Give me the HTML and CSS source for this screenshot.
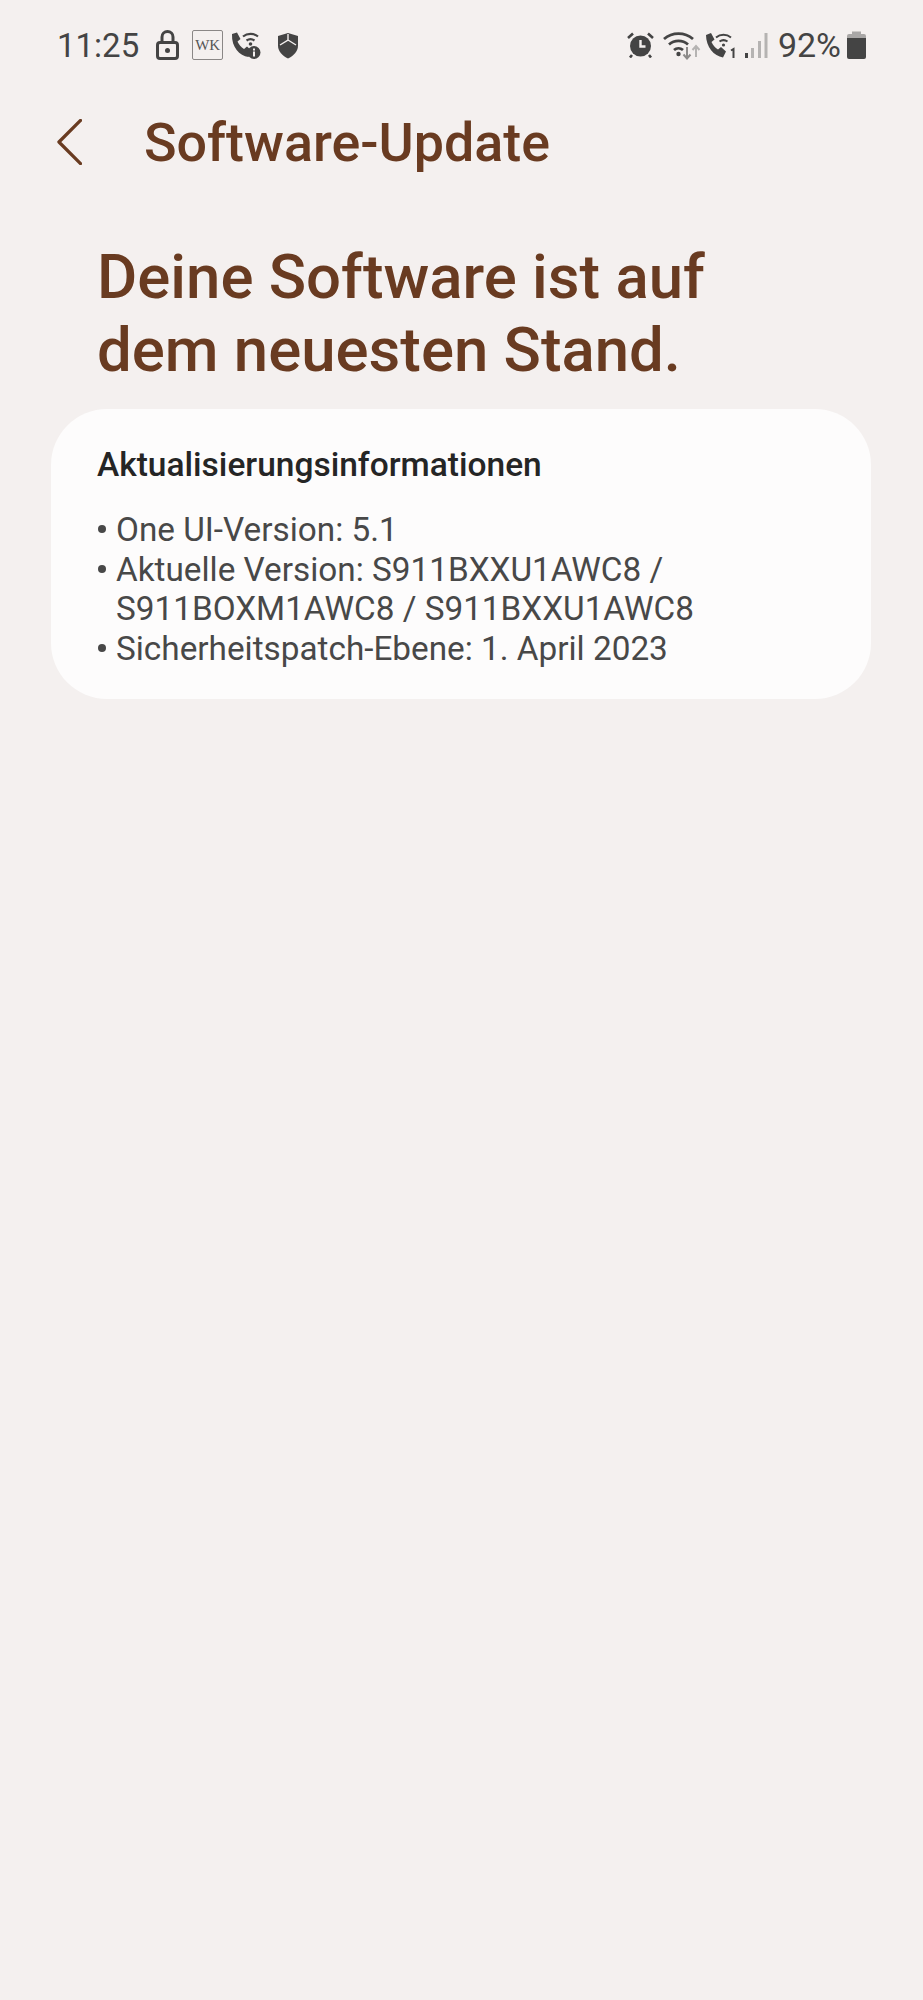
FILE: index.html
```html
<!DOCTYPE html>
<html>
<head>
  <meta name="viewport" content="width=device-width, initial-scale=1.0">
  <title>Software-Update</title>
  <link rel="stylesheet" href="styles.css">
</head>
<body>
  <div class="statusbar">
    <div class="status-group">
      <span class="time">11:25</span>
      <svg class="ic-lock" viewBox="0 0 23 30">
        <path d="M6 13V7a5.500 5.500 0 0 1 11 0v6" fill="none" stroke="#444" stroke-width="3"/>
        <rect x="1.500" y="12.500" width="20" height="16" rx="2.500" fill="none" stroke="#444" stroke-width="3"/>
        <circle cx="11.500" cy="20.500" r="2.500" fill="#444"/>
      </svg>
      <span class="wk">WK</span>
      <svg class="ic-call" viewBox="0 0 32 28">
        <path d="M3 3l5-1.500 3.500 6.500-3 2.500c1.500 3.500 3.500 5.500 6.500 7.500l3-2.500 5 4.500-3.500 6c-9-1-17-10-16.500-22.500z" fill="#444"/>
        <path d="M14 5.500a12 12 0 0 1 15 0M17.500 9.500a7 7 0 0 1 8 0" fill="none" stroke="#444" stroke-width="2.200"/>
        <circle cx="21.500" cy="13" r="1.800" fill="#444"/>
        <circle cx="25" cy="21.500" r="6.500" fill="#444"/>
        <rect x="24" y="20.500" width="2" height="5" fill="#f4f0ef"/>
        <rect x="24" y="17.500" width="2" height="2" fill="#f4f0ef"/>
      </svg>
      <svg class="ic-shield" viewBox="0 0 22 27">
        <path d="M11 1l10 3v9.500c0 6-4.500 10.500-10 13C5.500 24 1 19.500 1 13.500V4z" fill="#444"/>
        <path d="M11 2v6l-8 5M11 8l8 5" fill="none" stroke="#f4f0ef" stroke-width="1.400"/>
      </svg>
    </div>
    <div class="status-group">
      <svg class="ic-alarm" viewBox="0 0 27 26">
        <circle cx="13.500" cy="14" r="10.500" fill="#444"/>
        <path d="M13.500 8v6.500h5" fill="none" stroke="#f4f0ef" stroke-width="2.400"/>
        <path d="M1 6l5-4.500M26 6l-5-4.500M5 23l-2 2.500M22 23l2 2.500" fill="none" stroke="#444" stroke-width="2.600"/>
      </svg>
      <svg class="ic-wifi" viewBox="0 0 38 30">
        <path d="M1 9a22 22 0 0 1 29 0M6 14.500a14.500 14.500 0 0 1 19 0M11 20a7 7 0 0 1 9 0" fill="none" stroke="#444" stroke-width="2.800"/>
        <circle cx="15.500" cy="24" r="2.200" fill="#444"/>
        <path d="M24 17v11M20.500 24.500l3.500 4 3.500-4" fill="none" stroke="#8d8b8a" stroke-width="2"/>
        <path d="M33 27V16M29.500 20l3.500-4 3.500 4" fill="none" stroke="#b5b3b2" stroke-width="2"/>
      </svg>
      <svg class="ic-call2" viewBox="0 0 33 28">
        <path d="M3 4l5-2 3.500 6.500-3 2.500c1.500 3.500 3.500 5.500 6.500 7.500l3-2.500 5 4.500-3 6C11 25 3 16 3 4z" fill="#444"/>
        <path d="M13 6.500a12 12 0 0 1 15 0M16.500 10.500a7 7 0 0 1 8 0" fill="none" stroke="#444" stroke-width="2"/>
        <circle cx="20.500" cy="14" r="1.600" fill="#444"/>
        <path d="M28 19.500l2.500-1.500v9" fill="none" stroke="#444" stroke-width="2"/>
      </svg>
      <svg class="ic-signal" viewBox="0 0 24 28">
        <rect x="1" y="22" width="3" height="5" fill="#444"/>
        <rect x="7" y="17" width="3" height="10" fill="#b5b3b2"/>
        <rect x="14" y="10" width="3" height="17" fill="#b5b3b2"/>
        <rect x="20.500" y="2" width="3" height="25" fill="#b5b3b2"/>
      </svg>
      <span class="battery-pct">92%</span>
      <svg class="ic-battery" viewBox="0 0 19 28">
        <rect x="5" y="0.500" width="9" height="4" fill="#a9a7a6"/>
        <path d="M2 3h15a2 2 0 0 1 2 2v3H0V5a2 2 0 0 1 2-2z" fill="#a9a7a6"/>
        <path d="M0 7h19v19a2 2 0 0 1-2 2H2a2 2 0 0 1-2-2z" fill="#444"/>
      </svg>
    </div>
  </div>

  <div class="appbar">
    <svg class="back" viewBox="0 0 26 48">
      <path d="M24.500 1.500L2 24l22.500 22.500" fill="none" stroke="#693b21" stroke-width="3.400" stroke-linecap="round" stroke-linejoin="round"/>
    </svg>
    <span class="appbar-title">Software-Update</span>
  </div>

  <h1 class="headline">Deine Software ist auf<br>dem neuesten Stand.</h1>

  <div class="card">
    <div class="card-title">Aktualisierungsinformationen</div>
    <ul class="info">
      <li>One UI-Version: 5.1</li>
      <li>Aktuelle Version: S911BXXU1AWC8 /<br>S911BOXM1AWC8 / S911BXXU1AWC8</li>
      <li>Sicherheitspatch-Ebene: 1. April 2023</li>
    </ul>
  </div>
</body>
</html>
```

FILE: styles.css
```css
html, body {
  margin: 0;
  padding: 0;
}

body {
  height: 2000px;
  background-color: #f4f0ef;
  font-family: Roboto, sans-serif;
  overflow: hidden;
}

.statusbar {
  display: flex;
  justify-content: space-between;
  align-items: center;
  height: 46px;
  padding: 22px 57px 22px 57px;
  color: #444;
}

.status-group {
  display: flex;
  align-items: center;
}

.time {
  font-size: 33px;
  margin-right: 17px;
}

.ic-lock { width: 23px; height: 30px; margin-right: 13px; }

.wk {
  box-sizing: border-box;
  width: 31px;
  height: 30px;
  margin-right: 6px;
  border: 1px solid #8a8786;
  border-radius: 2px;
  font-family: "Liberation Serif", serif;
  font-size: 15px;
  line-height: 28px;
  text-align: center;
  color: #555;
}

.ic-call { width: 32px; height: 28px; margin-right: 16px; }
.ic-shield { width: 22px; height: 27px; }

.ic-alarm { width: 27px; height: 26px; margin-right: 9px; }
.ic-wifi { width: 38px; height: 30px; margin-right: 2px; }
.ic-call2 { width: 33px; height: 28px; margin-right: 8px; }
.ic-signal { width: 24px; height: 28px; margin-right: 10px; }

.battery-pct {
  font-size: 34px;
  margin-right: 6px;
}

.ic-battery { width: 19px; height: 28px; }

.appbar {
  display: flex;
  align-items: center;
  height: 62px;
  padding: 21px 0 0 57px;
}

.back {
  width: 25px;
  height: 46px;
  margin-right: 62px;
}

.appbar-title {
  font-size: 53.800px;
  font-weight: 500;
  color: #693b21;
}

.headline {
  margin: 68px 0 0 97px;
  font-size: 61.700px;
  font-weight: 500;
  line-height: 73px;
  color: #693b21;
}

.card {
  margin: 22px 52px 0 51px;
  padding: 36px 46px 26px 46px;
  height: 228px;
  background-color: #fdfcfc;
  border-radius: 56px;
}

.card-title {
  font-size: 33.500px;
  font-weight: 500;
  line-height: 40px;
  color: #252525;
}

.info {
  list-style: none;
  margin: 25px 0 0 0;
  padding: 0;
  font-size: 33.300px;
  line-height: 39.500px;
  color: #484848;
}

.info li {
  position: relative;
  padding-left: 19px;
}

.info li::before {
  content: "";
  position: absolute;
  left: 1px;
  top: 15px;
  width: 8px;
  height: 8px;
  border-radius: 50%;
  background-color: #484848;
}
```
